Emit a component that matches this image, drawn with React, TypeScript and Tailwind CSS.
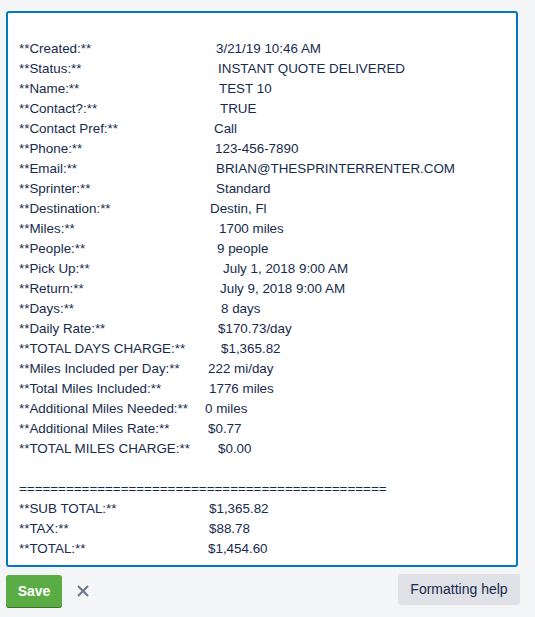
import React from "react";

const rows: [string, string, string][] = [
  ["**Created:**", "3/21/19 10:46 AM", "w-[197px]"],
  ["**Status:**", "INSTANT QUOTE DELIVERED", "w-[199px]"],
  ["**Name:**", "TEST 10", "w-[200px]"],
  ["**Contact?:**", "TRUE", "w-[201px]"],
  ["**Contact Pref:**", "Call", "w-[195px]"],
  ["**Phone:**", "123-456-7890", "w-[196px]"],
  ["**Email:**", "BRIAN@THESPRINTERRENTER.COM", "w-[197px]"],
  ["**Sprinter:**", "Standard", "w-[197px]"],
  ["**Destination:**", "Destin, Fl", "w-[191px]"],
  ["**Miles:**", "1700 miles", "w-[200px]"],
  ["**People:**", "9 people", "w-[198px]"],
  ["**Pick Up:**", "July 1, 2018 9:00 AM", "w-[204px]"],
  ["**Return:**", "July 9, 2018 9:00 AM", "w-[201px]"],
  ["**Days:**", "8 days", "w-[202px]"],
  ["**Daily Rate:**", "$170.73/day", "w-[199px]"],
  ["**TOTAL DAYS CHARGE:**", "$1,365.82", "w-[202px]"],
  ["**Miles Included per Day:**", "222 mi/day", "w-[189px]"],
  ["**Total Miles Included:**", "1776 miles", "w-[190px]"],
  ["**Additional Miles Needed:**", "0 miles", "w-[186px]"],
  ["**Additional Miles Rate:**", "$0.77", "w-[189px]"],
  ["**TOTAL MILES CHARGE:**", "$0.00", "w-[199px]"],
];

const totals: [string, string, string][] = [
  ["**SUB TOTAL:**", "$1,365.82", "w-[190px]"],
  ["**TAX:**", "$88.78", "w-[190px]"],
  ["**TOTAL:**", "$1,454.60", "w-[189px]"],
];

function Row({ r }: { r: [string, string, string] }) {
  return (
    <div className="flex h-[20px] items-center whitespace-nowrap">
      <span className={`${r[2]} shrink-0`}>{r[0]}</span>
      <span>{r[1]}</span>
    </div>
  );
}

export default function App() {
  return (
    <div
      className="min-h-[617px] w-[535px] bg-[#f4f5f7] pl-[6px] pt-[11px] text-[#172b4d]"
      style={{ fontFamily: '"Liberation Sans", Arial, sans-serif' }}
    >
      <div className="h-[556px] w-[512px] overflow-hidden rounded-[3px] border-2 border-[#0079bf] bg-white pl-[11px] pt-[6px] text-[13.4px] leading-[20px]">
        <div className="h-[20px]" />
        {rows.map((r) => (
          <Row key={r[0]} r={r} />
        ))}
        <div className="h-[20px]" />
        <div className="h-[20px] whitespace-nowrap">
          {"=".repeat(47)}
        </div>
        {totals.map((r) => (
          <Row key={r[0]} r={r} />
        ))}
      </div>
      <div className="mt-[7px] flex w-[514px] items-start">
        <button className="mt-px flex h-[32px] w-[56px] items-center justify-center rounded-[3px] bg-[#5aac44] text-[14px] font-bold text-white shadow-[0_1px_0_#3f6f21]">
          Save
        </button>
        <span className="ml-[14px] mt-[10px] flex h-[14px] w-[14px] items-center justify-center text-[#6b778c]">
          <svg width="14" height="14" viewBox="0 0 14 14" fill="none">
            <path d="M2 2L12 12M12 2L2 12" stroke="currentColor" strokeWidth="2" />
          </svg>
        </span>
        <div className="flex-1" />
        <button className="flex h-[31px] w-[122px] items-center justify-center rounded-[3px] bg-[#dfe1e6] text-[14px] text-[#172b4d]">
          Formatting help
        </button>
      </div>
    </div>
  );
}
